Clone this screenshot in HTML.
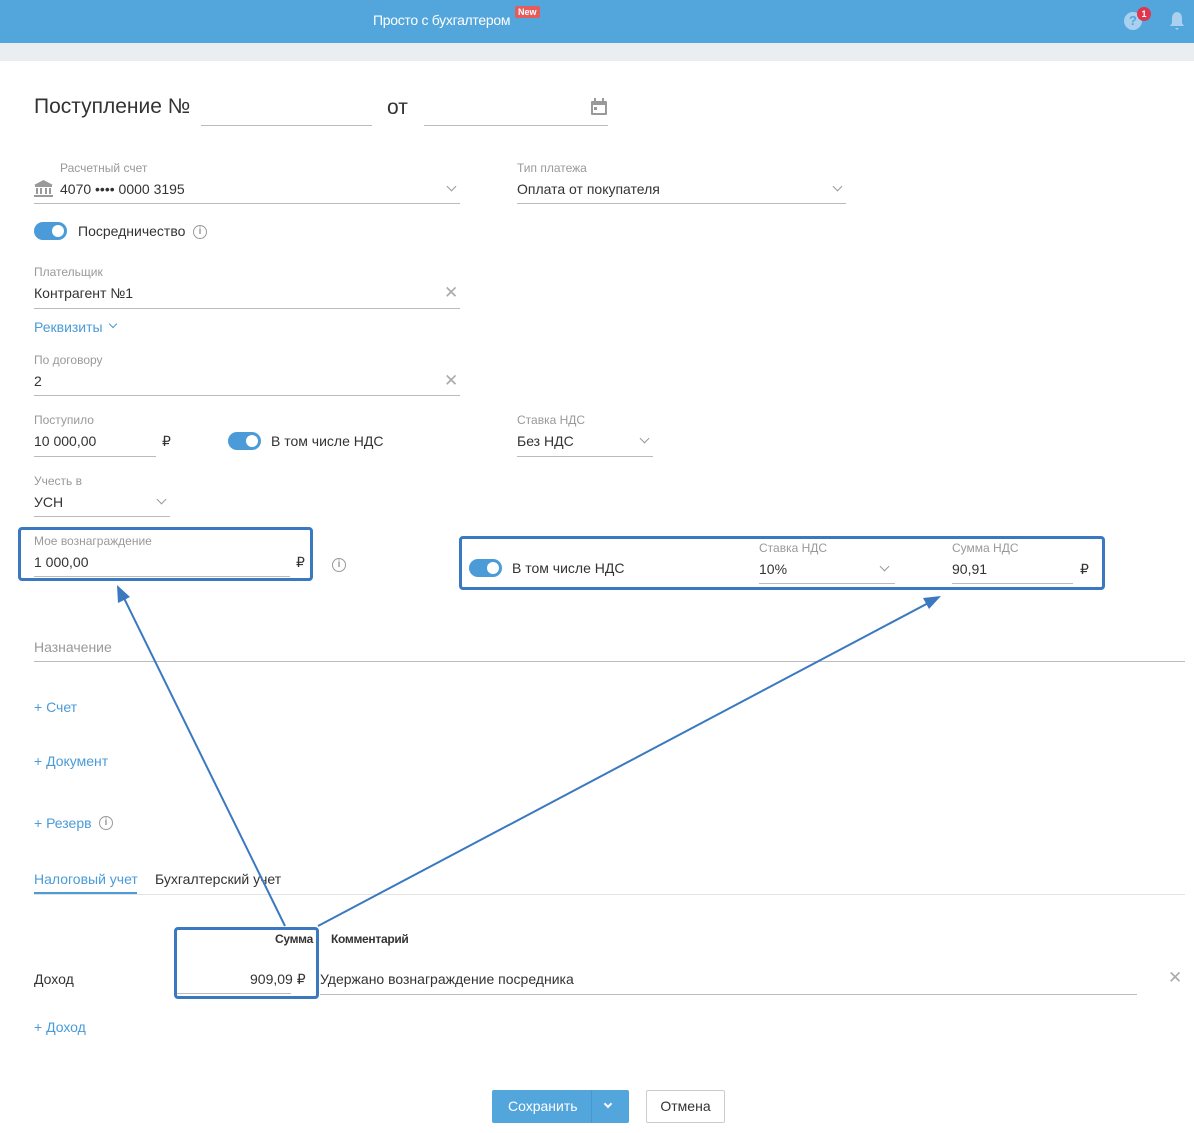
<!DOCTYPE html>
<html><head><meta charset="utf-8"><style>
*{margin:0;padding:0;box-sizing:border-box}
body{width:1194px;height:1133px;position:relative;background:#fff;font-family:"Liberation Sans",sans-serif;color:#333;font-size:14px;overflow:hidden}
.a{position:absolute;white-space:nowrap}
.lb{font-size:12px;color:#999}
.ln{position:absolute;height:1px;background:#bbb}
.bl{color:#4a9bd8}
.tg{position:absolute;width:33px;height:18px;border-radius:9px;background:#4a9bd8}
.tg:after{content:"";position:absolute;right:3px;top:3px;width:12px;height:12px;border-radius:50%;background:#fff}
.ch{position:absolute;width:7px;height:7px;border-right:1.5px solid #999;border-bottom:1.5px solid #999;transform:rotate(45deg)}
.x{position:absolute;font-size:17px;color:#aaa;line-height:1}
.i{position:absolute;width:14px;height:14px;border:1.3px solid #999;border-radius:50%;font-size:10px;color:#999;text-align:center;line-height:12px;font-weight:bold}
.box{position:absolute;border:3px solid #3a78c0;border-radius:4px}
</style></head><body>
<div class="a" style="left:0;top:0;width:1194px;height:43px;background:#52a6dc"></div>
<div class="a" style="left:0;top:43px;width:1194px;height:18px;background:#ebeef1"></div>
<div class="a" style="left:373px;top:12px;color:#fff;font-size:14px;letter-spacing:-0.3px">Просто с бухгалтером</div>
<div class="a" style="left:515px;top:6px;background:#e55c5c;color:#fff;font-size:9px;font-weight:bold;padding:1px 3px;border-radius:2px">New</div>
<div class="a" style="left:1124px;top:12px;width:18px;height:18px;border-radius:50%;background:#a9d0ee;color:#52a6dc;font-size:13px;font-weight:bold;text-align:center;line-height:18px">?</div>
<div class="a" style="left:1137px;top:7px;width:14px;height:14px;border-radius:50%;background:#e0364e;color:#fff;font-size:9px;text-align:center;line-height:14px;font-weight:bold">1</div>
<svg class="a" style="left:1169px;top:11px" width="16" height="20"><path d="M8 1c-3 0-5 3-5 6v5l-2 3h14l-2-3V7c0-3-2-6-5-6zM6 17h4l-2 2z" fill="#a9d0ee"/></svg>

<div class="a" style="left:34px;top:95px;font-size:21px;color:#333">Поступление №</div>
<div class="ln" style="left:201px;top:125px;width:171px"></div>
<div class="a" style="left:387px;top:96px;font-size:21px">от</div>
<div class="ln" style="left:424px;top:125px;width:184px"></div>
<svg class="a" style="left:590px;top:98px" width="18" height="18"><rect x="1" y="3" width="16" height="14" fill="#999" rx="1"/><rect x="3" y="7" width="12" height="8" fill="#fff"/><rect x="4" y="0" width="2" height="4" fill="#999"/><rect x="12" y="0" width="2" height="4" fill="#999"/><rect x="4" y="9" width="3" height="3" fill="#999"/></svg>

<div class="a lb" style="left:60px;top:161px">Расчетный счет</div>
<svg class="a" style="left:34px;top:180px" width="19" height="17"><path d="M9.5 0L0 5h19zM1 5h17v2H1zM2 8h2v6H2zM6 8h2v6H6zM11 8h2v6h-2zM15 8h2v6h-2zM0 15h19v2H0z" fill="#999"/></svg>
<div class="a" style="left:60px;top:181px">4070 •••• 0000 3195</div>
<div class="ch" style="left:448px;top:183px"></div>
<div class="ln" style="left:34px;top:203px;width:426px"></div>
<div class="a lb" style="left:517px;top:161px">Тип платежа</div>
<div class="a" style="left:517px;top:181px">Оплата от покупателя</div>
<div class="ch" style="left:834px;top:183px"></div>
<div class="ln" style="left:517px;top:203px;width:329px"></div>

<div class="tg" style="left:34px;top:222px"></div>
<div class="a" style="left:78px;top:223px">Посредничество</div>
<div class="i" style="left:193px;top:225px">i</div>

<div class="a lb" style="left:34px;top:265px">Плательщик</div>
<div class="a" style="left:34px;top:285px">Контрагент №1</div>
<div class="x" style="left:444px;top:284px">✕</div>
<div class="ln" style="left:34px;top:308px;width:426px"></div>
<div class="a bl" style="left:34px;top:319px">Реквизиты</div>
<div class="ch" style="left:110px;top:321px;border-color:#4a9bd8;width:6px;height:6px"></div>

<div class="a lb" style="left:34px;top:353px">По договору</div>
<div class="a" style="left:34px;top:373px">2</div>
<div class="x" style="left:444px;top:372px">✕</div>
<div class="ln" style="left:34px;top:395px;width:426px"></div>

<div class="a lb" style="left:34px;top:413px">Поступило</div>
<div class="a" style="left:34px;top:433px">10 000,00</div>
<div class="ln" style="left:34px;top:456px;width:122px"></div>
<div class="a" style="left:162px;top:433px">₽</div>
<div class="tg" style="left:228px;top:432px"></div>
<div class="a" style="left:271px;top:433px">В том числе НДС</div>
<div class="a lb" style="left:517px;top:413px">Ставка НДС</div>
<div class="a" style="left:517px;top:433px">Без НДС</div>
<div class="ch" style="left:641px;top:435px"></div>
<div class="ln" style="left:517px;top:456px;width:136px"></div>

<div class="a lb" style="left:34px;top:474px">Учесть в</div>
<div class="a" style="left:34px;top:494px">УСН</div>
<div class="ch" style="left:158px;top:496px"></div>
<div class="ln" style="left:34px;top:516px;width:136px"></div>

<div class="a lb" style="left:34px;top:534px">Мое вознаграждение</div>
<div class="a" style="left:34px;top:554px">1 000,00</div>
<div class="ln" style="left:34px;top:576px;width:256px"></div>
<div class="a" style="left:296px;top:554px">₽</div>
<div class="i" style="left:332px;top:558px">i</div>
<div class="box" style="left:18px;top:527px;width:295px;height:54px"></div>

<div class="tg" style="left:469px;top:559px"></div>
<div class="a" style="left:512px;top:560px">В том числе НДС</div>
<div class="a lb" style="left:759px;top:541px">Ставка НДС</div>
<div class="a" style="left:759px;top:561px">10%</div>
<div class="ch" style="left:881px;top:563px"></div>
<div class="ln" style="left:759px;top:583px;width:136px"></div>
<div class="a lb" style="left:952px;top:541px">Сумма НДС</div>
<div class="a" style="left:952px;top:561px">90,91</div>
<div class="ln" style="left:952px;top:583px;width:121px"></div>
<div class="a" style="left:1080px;top:561px">₽</div>
<div class="box" style="left:459px;top:536px;width:646px;height:54px"></div>

<div class="a" style="left:34px;top:639px;color:#999">Назначение</div>
<div class="ln" style="left:34px;top:661px;width:1151px"></div>
<div class="a bl" style="left:34px;top:699px">+ Счет</div>
<div class="a bl" style="left:34px;top:753px">+ Документ</div>
<div class="a bl" style="left:34px;top:815px">+ Резерв</div>
<div class="i" style="left:99px;top:816px">i</div>

<div class="a bl" style="left:34px;top:871px">Налоговый учет</div>
<div class="a" style="left:34px;top:892px;width:103px;height:2px;background:#4a9bd8"></div>
<div class="a" style="left:155px;top:871px">Бухгалтерский учет</div>
<div class="ln" style="left:34px;top:894px;width:1151px;background:#e3e3e3"></div>

<div class="a" style="left:275px;top:932px;font-size:12px;font-weight:bold;letter-spacing:-0.3px">Сумма</div>
<div class="a" style="left:331px;top:932px;font-size:12px;font-weight:bold;letter-spacing:-0.3px">Комментарий</div>
<div class="a" style="left:34px;top:971px">Доход</div>
<div class="a" style="left:250px;top:971px">909,09 ₽</div>
<div class="ln" style="left:176px;top:993px;width:115px"></div>
<div class="a" style="left:320px;top:971px">Удержано вознаграждение посредника</div>
<div class="ln" style="left:320px;top:994px;width:817px"></div>
<div class="x" style="left:1168px;top:969px">✕</div>
<div class="box" style="left:174px;top:927px;width:145px;height:72px"></div>
<div class="a bl" style="left:34px;top:1019px">+ Доход</div>

<div class="a" style="left:492px;top:1090px;width:137px;height:33px;background:#52a6dc;border-radius:2px"></div>
<div class="a" style="left:591px;top:1090px;width:1px;height:33px;background:#4796cf"></div>
<div class="a" style="left:508px;top:1098px;color:#fff">Сохранить</div>
<div class="ch" style="left:605px;top:1101px;border-color:#fff;width:6px;height:6px;border-width:2px"></div>
<div class="a" style="left:646px;top:1090px;width:79px;height:33px;border:1px solid #ccc;border-radius:2px;text-align:center;line-height:31px">Отмена</div>

<svg class="a" style="left:0;top:0" width="1194" height="1133">
<g stroke="#3a78c0" stroke-width="2" fill="#3a78c0">
<line x1="285" y1="926" x2="121" y2="592"/>
<polygon points="117,585 118,603 130,597" stroke="none"/>
<line x1="318" y1="926" x2="934" y2="600"/>
<polygon points="941,596 923,598 929,609" stroke="none"/>
</g></svg>
</body></html>
